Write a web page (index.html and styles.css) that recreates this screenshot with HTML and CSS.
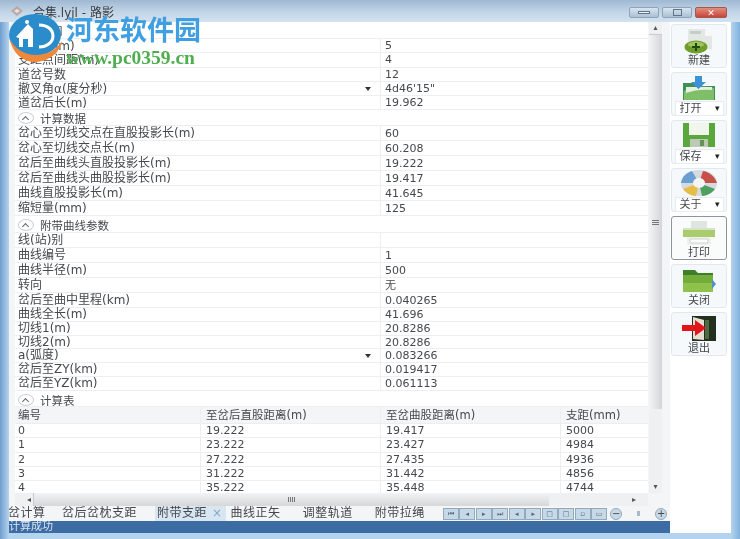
FILE: index.html
```html
<!DOCTYPE html>
<html>
  <head>
    <title>合集.lyjl - 路影</title>
    <link rel="stylesheet" href="styles.css">
  </head>
  <body>
    <div class="window">
      <header class="titlebar">
        <svg class="app-icon" width="14" height="12" viewBox="0 0 14 12"><path d="M1 6l6-5 6 5-6 5z" fill="#b9a9a4"/><path d="M4 6l3-2 3 2-3 2z" fill="#e9e3e0"/></svg>
        <span class="title">合集.lyjl - 路影</span>
        <div class="win-buttons">
          <span class="win-btn"><i class="glyph-min"></i></span>
          <span class="win-btn"><i class="glyph-max"></i></span>
          <span class="win-btn close">✕</span>
        </div>
      </header>
      <div class="client">
        <div class="work">
          <div class="panes">
            <main class="sheet">
              <div class="group first"><span class="chevron"></span>甘口</div>
              <div class="row snug"><span>轨距(mm)</span><span>5</span></div>
              <div class="row snug"><span>支距点间距(m)</span><span>4</span></div>
              <div class="row snug"><span>道岔号数</span><span>12</span></div>
              <div class="row snug drop"><span>撤叉角α(度分秒)</span><span>4d46'15"</span></div>
              <div class="row snug"><span>道岔后长(m)</span><span>19.962</span></div>
              <div class="group"><span class="chevron"></span>计算数据</div>
              <div class="row"><span>岔心至切线交点在直股投影长(m)</span><span>60</span></div>
              <div class="row"><span>岔心至切线交点长(m)</span><span>60.208</span></div>
              <div class="row"><span>岔后至曲线头直股投影长(m)</span><span>19.222</span></div>
              <div class="row"><span>岔后至曲线头曲股投影长(m)</span><span>19.417</span></div>
              <div class="row"><span>曲线直股投影长(m)</span><span>41.645</span></div>
              <div class="row"><span>缩短量(mm)</span><span>125</span></div>
              <div class="group tall"><span class="chevron"></span>附带曲线参数</div>
              <div class="row"><span>线(站)别</span><span></span></div>
              <div class="row"><span>曲线编号</span><span>1</span></div>
              <div class="row"><span>曲线半径(m)</span><span>500</span></div>
              <div class="row"><span>转向</span><span>无</span></div>
              <div class="row"><span>岔后至曲中里程(km)</span><span>0.040265</span></div>
              <div class="row tight"><span>曲线全长(m)</span><span>41.696</span></div>
              <div class="row tight"><span>切线1(m)</span><span>20.8286</span></div>
              <div class="row tight"><span>切线2(m)</span><span>20.8286</span></div>
              <div class="row tight drop"><span>a(弧度)</span><span>0.083266</span></div>
              <div class="row tight"><span>岔后至ZY(km)</span><span>0.019417</span></div>
              <div class="row tight"><span>岔后至YZ(km)</span><span>0.061113</span></div>
              <div class="group table-title"><span class="chevron"></span>计算表</div>
              <div class="table-row head"><span>编号</span><span>至岔后直股距离(m)</span><span>至岔曲股距离(m)</span><span>支距(mm)</span></div>
              <div class="table-row"><span>0</span><span>19.222</span><span>19.417</span><span>5000</span></div>
              <div class="table-row"><span>1</span><span>23.222</span><span>23.427</span><span>4984</span></div>
              <div class="table-row"><span>2</span><span>27.222</span><span>27.435</span><span>4936</span></div>
              <div class="table-row"><span>3</span><span>31.222</span><span>31.442</span><span>4856</span></div>
              <div class="table-row"><span>4</span><span>35.222</span><span>35.448</span><span>4744</span></div>
            </main>
            <div class="vscroll">
              <span class="arrow">▴</span>
              <div class="vthumb"><span class="grip-h"></span></div>
              <span class="arrow">▾</span>
            </div>
          </div>
          <div class="hscroll">
            <span class="arrow">◂</span>
            <div class="hthumb"><span class="grip-v"></span></div>
            <span class="arrow">▸</span>
          </div>
          <nav class="tabs">
            <span class="tab cut">岔计算</span>
            <span class="tab">岔后岔枕支距</span>
            <span class="tab active">附带支距<b>×</b></span>
            <span class="tab">曲线正矢</span>
            <span class="tab">调整轨道</span>
            <span class="tab">附带拉绳</span>
            <div class="pager">
              <i>⏮</i><i>◂</i><i>▸</i><i>⏭</i><i>◂</i><i>▸</i><i>□</i><i>□</i><i>▫</i><i>▭</i>
            </div>
            <div class="zoomer"><span class="zoom-btn">−</span><span class="zoom-dot"></span><span class="zoom-btn">+</span></div>
          </nav>
          <div class="status">计算成功</div>
        </div>
        <aside class="toolbar">
          <button class="tool">
            <svg width="36" height="28" viewBox="0 0 36 28"><path d="M7 3h17l7 7v13H7z" fill="#e3e8e5"/><path d="M24 3v7h7z" fill="#f7f8f7"/><path d="M9 5h11v3H9z" fill="#c4cdc8"/><ellipse cx="15" cy="21" rx="11.500" ry="6.500" fill="#6f9e2c"/><ellipse cx="15" cy="18.500" rx="8" ry="3" fill="#9fc45c"/><path d="M15 17v8M11 21h8" stroke="#1f4a10" stroke-width="2"/></svg>
            <span class="tool-label">新建</span>
          </button>
          <button class="tool menu">
            <svg width="36" height="28" viewBox="0 0 36 28"><path d="M2 9h11l2 3h19v14H2z" fill="#3f8f58"/><path d="M3 17c9-5 21-5 30-3v12H3z" fill="#7fbf6a"/><path d="M5 13h26v3c-9-1-18 0-26 3z" fill="#e6f0e0"/><path d="M14 2h7v6h4l-7.500 7-7.500-7h4z" fill="#3d8fd6"/></svg>
            <span class="tool-label">打开<em>▾</em></span>
          </button>
          <button class="tool menu">
            <svg width="36" height="28" viewBox="0 0 36 28"><path d="M2 1h32v24H2z" fill="#5aa83c"/><path d="M8 1h20v12H8z" fill="#f1f6ec"/><path d="M9 17h18v8H9z" fill="#bcc9b4"/><path d="M19 18h4v6h-4z" fill="#66905a"/></svg>
            <span class="tool-label">保存<em>▾</em></span>
          </button>
          <button class="tool menu">
            <svg width="36" height="28" viewBox="0 0 36 28"><ellipse cx="18" cy="13" rx="18" ry="13" fill="#d5dade"/><path d="M18 13L11 1C5 3 1 7 0 13z" fill="#6a9fd4"/><path d="M18 13l4-12c7 1 12 6 14 12z" fill="#c7504a"/><path d="M18 13L2 19c3 4 8 7 13 7z" fill="#e8bd45"/><path d="M18 13l16 6c-3 4-8 7-13 7z" fill="#4fa060"/><ellipse cx="18" cy="13" rx="6" ry="5" fill="#f4f5f6"/></svg>
            <span class="tool-label">关于<em>▾</em></span>
          </button>
          <button class="tool pressed">
            <svg width="36" height="28" viewBox="0 0 36 28"><path d="M10 3h16v8H10z" fill="#dfe6df"/><path d="M2 10h32v9H2z" fill="#a9cd6c"/><path d="M2 10h32v2H2z" fill="#d6e3c8"/><path d="M6 19h24v8H6z" fill="#eef1ee"/><path d="M9 21h18v4H9z" fill="#fbfcfb" stroke="#cdd4cf"/></svg>
            <span class="tool-label">打印</span>
          </button>
          <button class="tool">
            <svg width="36" height="28" viewBox="0 0 36 28"><path d="M2 4h12l3 3h15v19H2z" fill="#3f7f2a"/><path d="M2 9h30v17H2z" fill="#74ad3a"/><path d="M2 17h30v9H2z" fill="#8fc24c"/><path d="M31 13l4 5-4 5z" fill="#4f93c9"/></svg>
            <span class="tool-label">关闭</span>
          </button>
          <button class="tool">
            <svg width="36" height="28" viewBox="0 0 36 28"><path d="M11 2h24v25H11z" fill="#24301e"/><path d="M12 3l11 3v20l-11-1z" fill="#e4dfd2"/><path d="M24 6h4v19h-4z" fill="#4f6a44"/><path d="M1 11h13V6l11 8-11 8v-5H1z" fill="#e2141c"/></svg>
            <span class="tool-label">退出</span>
          </button>
        </aside>
      </div>
    </div>
    <div class="watermark">
      <svg class="wm-logo" width="60" height="48" viewBox="0 0 60 48"><ellipse cx="29" cy="21" rx="26" ry="21" fill="#2b8ccc"/><path d="M10 23L22 10l5 5v18H13V24z" fill="#fff"/><path d="M17 25h5v8h-5z" fill="#2b8ccc"/><circle cx="21" cy="8" r="2" fill="#fff"/><path d="M33 11c9 0 14 5 14 11s-6 11-14 11" fill="none" stroke="#fff" stroke-width="3"/><path d="M4 25c4 9 14 16 26 16 11 0 20-5 26-14-2 12-14 21-27 21C16 48 6 38 4 25z" fill="#f0883a"/></svg>
      <div class="wm-name">河东软件园</div>
      <div class="wm-url">www.pc0359.cn</div>
    </div>
  </body>
</html>
```
FILE: styles.css
```css
/* Whole window, slightly soft like the source capture */
html, body {
  margin: 0;
  padding: 0;
  height: 100%;
  overflow: hidden;
}
body {
  position: relative;
  font-family: "DejaVu Sans", "Noto Sans CJK SC", sans-serif;
  font-size: 11px;
  color: #45484c;
  filter: blur(0.55px);
}
.window {
  height: 539px;
  display: flex;
  flex-direction: column;
  box-sizing: border-box;
  padding: 0 9px 6px;
  background: linear-gradient(90deg, #6f9fd0 0, #b4d3ee 9px, #b4d3ee 731px, #7fb2dd 740px);
}
.titlebar {
  height: 22px;
  flex: none;
  margin: 0 -9px;
  padding: 0 13px 0 10px;
  display: flex;
  align-items: center;
  background: linear-gradient(180deg, #9fb9d2 0, #c2d5e7 12px, #d3e2f0 100%);
}
.app-icon {
  margin-right: 9px;
}
.title {
  font-size: 12px;
  color: #3d4045;
}
.win-buttons {
  margin-left: auto;
  margin-top: 3px;
  display: flex;
  gap: 3px;
}
.win-btn {
  width: 30px;
  height: 11px;
  display: flex;
  align-items: center;
  justify-content: center;
  border: 1px solid #8da4ba;
  box-sizing: border-box;
  background: linear-gradient(180deg, #d9e4ee, #aac0d4);
  border-radius: 2px;
}
.win-btn.close {
  width: 32px;
  font-size: 9px;
  font-weight: bold;
  color: #fff;
  border-color: #a5594c;
  background: linear-gradient(180deg, #e08f7e, #c9443a);
}
.glyph-min {
  width: 12px;
  height: 3px;
  background: #f0f4f8;
  border: 1px solid #5d7387;
  box-sizing: border-box;
}
.glyph-max {
  width: 9px;
  height: 7px;
  border: 1px solid #5d7387;
  box-sizing: border-box;
}
.client {
  flex: 1;
  display: flex;
  min-height: 0;
}
.work {
  width: 661px;
  flex: none;
  display: flex;
  flex-direction: column;
  background: #f3f5f7;
}
.panes {
  height: 471px;
  flex: none;
  display: flex;
  padding-left: 6px;
}
.sheet {
  width: 633px;
  flex: none;
  background: #fff;
  overflow: hidden;
}
.group {
  height: 16px;
  display: flex;
  align-items: center;
  gap: 6px;
  padding-left: 3px;
  background: #fff;
  border-bottom: 1px solid #eceef0;
  box-sizing: border-box;
  font-size: 11.500px;
}
.group.first {
  height: 17px;
}
.group.tall {
  height: 16.500px;
  padding-top: 2px;
}
.group.table-title {
  height: 16.700px;
  padding-top: 2px;
}
.chevron {
  width: 14px;
  height: 10px;
  border: 1px solid #c9ced3;
  border-radius: 50%;
  position: relative;
}
.chevron::after {
  content: "";
  position: absolute;
  left: 4px;
  top: 4px;
  width: 4px;
  height: 4px;
  border-left: 1px solid #666;
  border-top: 1px solid #666;
  transform: rotate(45deg);
}
.row {
  height: 15px;
  line-height: 15px;
  display: grid;
  grid-template-columns: 365px 1fr;
  border-bottom: 1px solid #eceef0;
  box-sizing: border-box;
  position: relative;
}
.row.snug {
  height: 14.300px;
  line-height: 14px;
}
.row.tight {
  height: 13.800px;
  line-height: 13.800px;
}
.row span {
  padding-left: 3px;
  white-space: nowrap;
  font-size: 12px;
}
.row span + span {
  padding-left: 4px;
  font-size: 11px;
  border-left: 1px solid #eceef0;
}
.row.drop::after {
  content: "";
  position: absolute;
  left: 350px;
  top: 5px;
  border: 3px solid transparent;
  border-top: 4px solid #333;
}
.table-row {
  height: 14.300px;
  line-height: 14px;
  display: grid;
  grid-template-columns: 185px 180px 180px 1fr;
  border-bottom: 1px solid #eceef0;
  box-sizing: border-box;
}
.table-row.head {
  height: 16.500px;
  line-height: 16px;
  background: #f4f5f6;
}
.table-row span {
  padding-left: 5px;
  border-left: 1px solid #eceef0;
  white-space: nowrap;
}
.table-row.head span {
  font-size: 11.500px;
}
.table-row span:first-child {
  padding-left: 3px;
  border-left: 0;
}
.vscroll {
  width: 13px;
  margin-left: 1px;
  display: flex;
  flex-direction: column;
  align-items: center;
  background: #eef0f2;
}
.arrow {
  width: 8px;
  height: 12px;
  flex: none;
  font-size: 8px;
  line-height: 12px;
  text-align: center;
  color: #555;
}
.vthumb {
  flex: 1;
  width: 13px;
  margin-bottom: 72px;
  display: flex;
  align-items: center;
  justify-content: center;
  background: linear-gradient(90deg, #f3f4f5, #d3d6d9);
  border-top: 1px solid #c7cbce;
}
.grip-h {
  width: 7px;
  height: 5px;
  background: repeating-linear-gradient(180deg, #777 0, #777 1px, transparent 1px, transparent 2px);
}
.hscroll {
  height: 13px;
  flex: none;
  margin-left: 6px;
  width: 633px;
  display: flex;
  align-items: center;
  background: #eef0f2;
  padding: 0 10px;
  box-sizing: border-box;
}
.hthumb {
  width: 515px;
  height: 13px;
  margin-right: auto;
  display: flex;
  align-items: center;
  justify-content: center;
  background: linear-gradient(180deg, #f2f3f4, #d5d7d9);
  border-left: 1px solid #c7cbce;
}
.grip-v {
  width: 7px;
  height: 5px;
  background: repeating-linear-gradient(90deg, #777 0, #777 1px, transparent 1px, transparent 2px);
}
.tabs {
  height: 15px;
  flex: none;
  display: flex;
  align-items: center;
  font-size: 12px;
  line-height: 15px;
  letter-spacing: 0.5px;
  white-space: nowrap;
  overflow: hidden;
}
.tab {
  margin-right: 22px;
  flex: none;
}
.tab.cut {
  margin-left: -1px;
  margin-right: 16.500px;
}
.tab:nth-child(2) {
  margin-right: 18px;
}
.tab.active {
  margin-right: 5px;
  padding: 0 3px 0 2px;
  background: #d8e6f2;
}
.tab.active b {
  margin-left: 5px;
  font-weight: normal;
  color: #7fa8c8;
}
.tab:nth-child(6) {
  margin-right: 18px;
}
.pager {
  display: flex;
  gap: 0.500px;
  flex: none;
}
.pager i {
  width: 14px;
  height: 10px;
  border: 1px solid #93aabb;
  background: #c7d8e6;
  font-style: normal;
  font-size: 7px;
  line-height: 10px;
  letter-spacing: 0;
  text-align: center;
  color: #567;
}
.zoomer {
  width: 57px;
  margin-left: 3px;
  display: flex;
  align-items: center;
  justify-content: space-between;
  flex: none;
}
.zoom-btn {
  width: 12px;
  height: 12px;
  border: 1px solid #93aabb;
  border-radius: 50%;
  box-sizing: border-box;
  background: #c7d8e6;
  font-size: 10px;
  line-height: 9px;
  letter-spacing: 0;
  text-align: center;
}
.zoom-dot {
  width: 3px;
  height: 5px;
  background: #a9b9c5;
}
.status {
  height: 12px;
  flex: none;
  line-height: 12px;
  font-size: 11px;
  color: #d7e5f2;
  background: #3d6ba3;
  overflow: hidden;
}
.toolbar {
  flex: 1;
  padding: 2px 4px 0 1px;
  display: flex;
  flex-direction: column;
  gap: 4px;
  background: #fff;
}
.tool {
  height: 44px;
  padding: 1px 0 0;
  display: flex;
  flex-direction: column;
  align-items: center;
  font-family: inherit;
  color: #45484c;
  background: #f6f9fb;
  border: 1px solid #e2e9ee;
  border-radius: 3px;
}
.tool.pressed {
  background: #fafbfb;
  border-color: #8d949a;
}
.tool.menu .tool-label {
  width: 49px;
  margin-top: -1px;
  padding-left: 4px;
  box-sizing: border-box;
  text-align: left;
  border: 1px solid #e7ecf0;
  background: #fff;
  display: flex;
  justify-content: space-between;
}
.tool-label {
  font-size: 11px;
  line-height: 13px;
}
.tool-label em {
  font-style: normal;
  font-size: 9px;
  margin-right: 3px;
  color: #222;
}
.tool svg {
  flex: none;
}
/* site stamp pasted over the top left corner */
.watermark {
  position: absolute;
  left: 6px;
  top: 14px;
  width: 200px;
  height: 56px;
}
.wm-logo {
  position: absolute;
  left: 0;
  top: 0;
}
.wm-name {
  position: absolute;
  left: 60px;
  top: 0;
  font-family: "Noto Sans CJK SC", sans-serif;
  font-size: 27px;
  font-weight: 700;
  line-height: 30px;
  white-space: nowrap;
  color: #3f9fe0;
}
.wm-url {
  position: absolute;
  left: 60px;
  top: 34px;
  font-family: "Liberation Serif", serif;
  font-size: 19.500px;
  font-weight: 700;
  line-height: 20px;
  white-space: nowrap;
  color: #4fae4f;
}
```
